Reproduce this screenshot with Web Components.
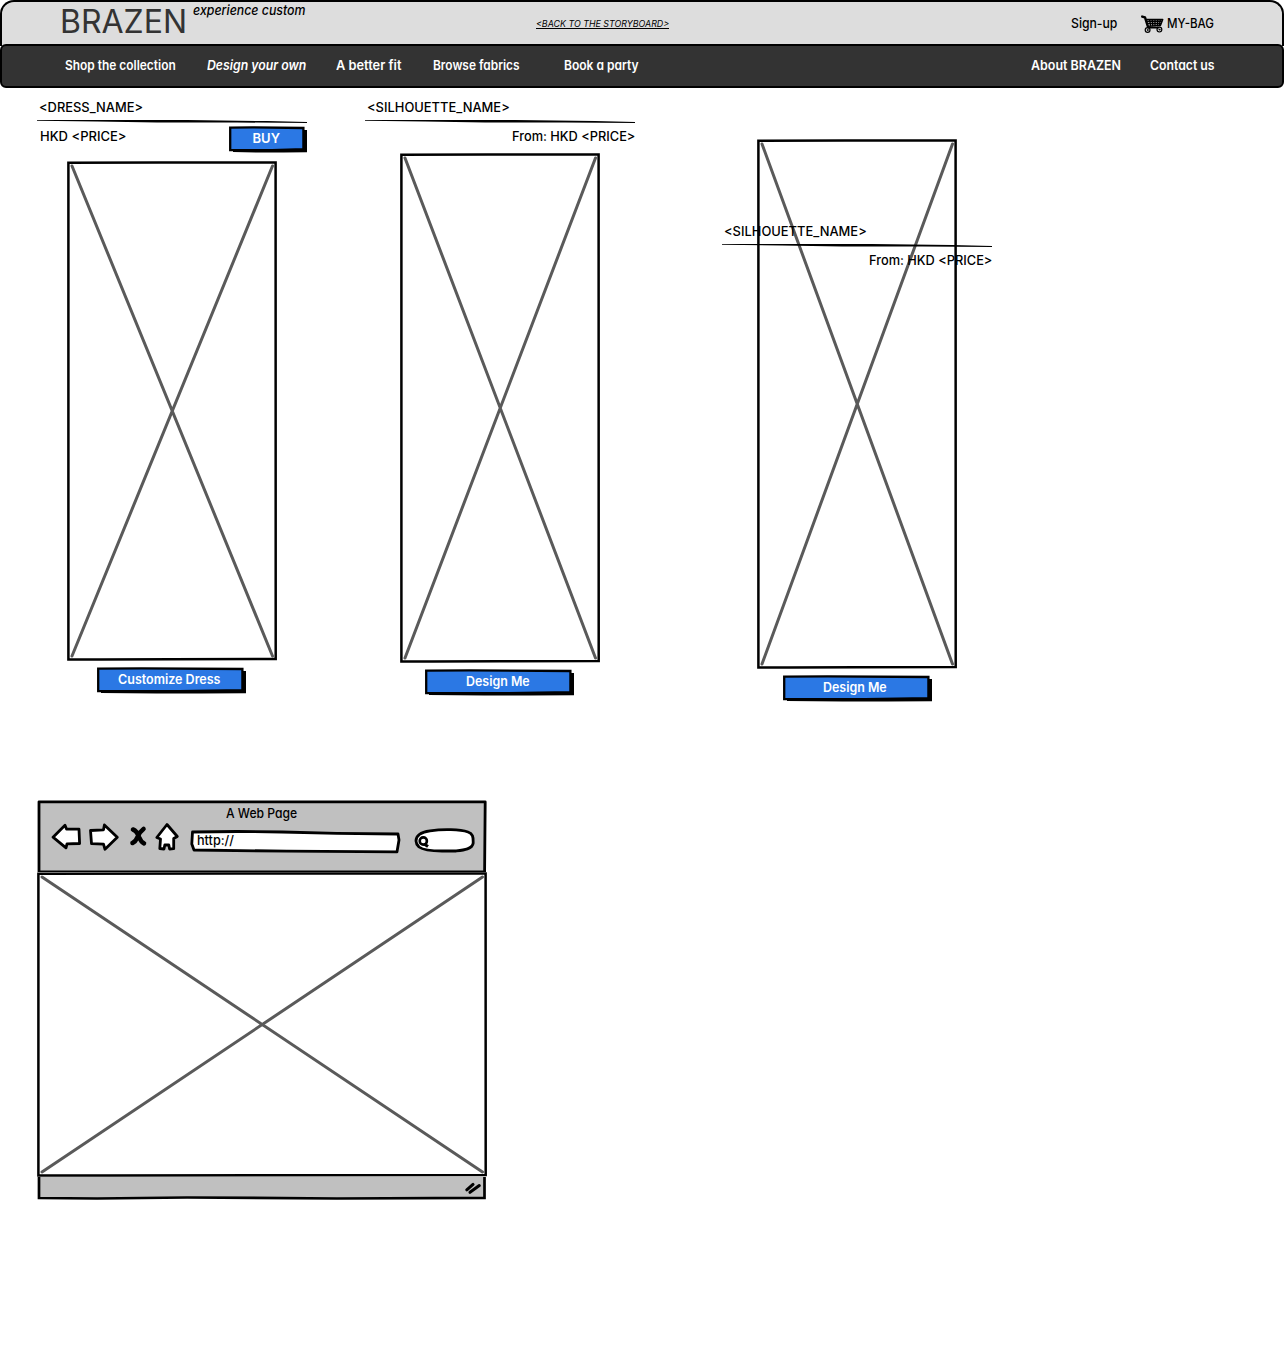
<!DOCTYPE html>
<html lang="en">
<head>
<meta charset="utf-8">
<title>BRAZEN</title>
<style>
body{margin:0;background:#fff;color:#000;font:500 13px/16px Inter,Lato,"Liberation Sans",sans-serif;font-feature-settings:"cv11" 1}
</style>
</head>
<body>
<brazen-page></brazen-page>
<script>
const define=(name,html,setup)=>customElements.define(name,class extends HTMLElement{
  connectedCallback(){
    if(this.shadowRoot)return;
    const t=document.createElement('template');
    t.innerHTML=typeof html==='function'?html(this):html;
    this.attachShadow({mode:'open'}).append(t.content.cloneNode(true));
    if(setup)setup(this);
  }
});

// Text fitted to a given width: <sk-label w="111">
define('sk-label',el=>`<style>
:host{display:block;flex:none;width:${el.getAttribute('w')}px;height:1.24em;line-height:1.24;white-space:nowrap}
span{display:inline-block;transform-origin:0 50%}
</style><span><slot></slot></span>`,el=>{
  const s=el.shadowRoot.querySelector('span');
  s.style.transform=`scaleX(${el.getAttribute('w')/s.offsetWidth})`;
});

define('sk-button',el=>{
  const w=+el.getAttribute('w');
  return `<style>
:host{display:grid;flex:none;width:${w}px;height:27px;color:#fff;font-weight:600}
svg,div{grid-area:1/1}
div{display:flex;justify-content:center;align-items:center;width:${w-4}px;height:25px}
</style>
<svg width="${w}" height="27"><path d="M4 4H${w}V26.2L${w*.7} 26.6H${w*.4}L4 26Z"/>
<path d="M1.2 1.6L${w*.3} 1.4L${w-3.6} 2V23.2L${w*.55} 24.2L1.2 24Z" fill="#2b78e4" stroke="#000" stroke-width="2.3"/></svg>
<div><slot></slot></div>`;
});

define('sk-rule',`<style>:host{display:block;height:5px}svg{display:block}</style>
<svg width="270" height="5"><path d="M0 1L60 1L150 1.1L230 2.1L270 3.1V4L200 3.5L120 3.4L60 2.5L0 1.8Z"/></svg>`);

define('sk-image',el=>{
  const w=+el.getAttribute('w'),h=+el.getAttribute('h');
  return `<style>:host{display:block;width:${w}px;height:${h}px}svg{display:block}</style>
<svg width="${w}" height="${h}" fill="none">
<path d="M5 5L${w-4.5} ${h-5}M${w-4.5} 5L5 ${h-5}" stroke="#5a5a5a" stroke-width="3" stroke-linecap="round"/>
<path d="M1.4 1.8L${w*.44} 1.6L${w-1.4} 1.4L${w-1.3} ${h-2}L${w*.5} ${h-1.8}L${w*.16} ${h-1.4}L1.4 ${h-1.6}Z" stroke="#000" stroke-width="2.5"/></svg>`;
});

define('sk-cart',`<style>:host{display:block;flex:none;width:24px;height:18px}svg{display:block}</style>
<svg width="24" height="18" fill="none" stroke="#000" stroke-linecap="round" stroke-linejoin="round">
<path d="M2.2 1.6L5 2.4L8 11.8" stroke-width="2.4"/><path d="M6.5 4.4H22.7L20.4 10.5L8.5 11.2" stroke-width="1.5"/>
<path d="M7 6.3H21.5M8 8.5H20.5M9.6 4.6L10.6 10.7M12.3 4.6L12.8 10.7M15 4.6V10.7M17.7 4.6L17.4 10.7M20.3 4.6L19.3 10.2" stroke-width="1.4"/>
<path d="M8 12.8H18.5" stroke-width="1.6"/><circle cx="7.6" cy="15" r="2.4" stroke-width="1.2"/><circle cx="19.4" cy="14.6" r="2.4" stroke-width="1.2"/><circle cx="7.6" cy="15" r=".5"/><circle cx="19.4" cy="14.6" r=".5"/></svg>`);

define('brazen-header',`<style>
:host{display:block}
.top,.nav{display:flex;box-sizing:border-box;border:2px solid #000}
.top{height:46px;background:#ddd;border-bottom:0;border-radius:14px 14px 0 0;padding-left:58px}
.nav{height:44px;margin-top:-2px;background:#333;color:#fff;border-radius:6px;padding:0 0 1px 63px;align-items:center;font-weight:600}
.logo{font-size:32px;font-weight:400;color:#333}
.tag{font-style:italic;margin:0 0 0 6px}
.back{font-size:9px;font-style:italic;font-weight:400;height:10px;border-bottom:1px solid #000;margin:16px 0 0 230px}
.sign{margin:13px 0 0 402px}
sk-cart{margin:13px 3px 0 23px}
.bag{margin-top:13px}
</style>
<div class="top"><sk-label class="logo" w="127">BRAZEN</sk-label><sk-label class="tag" w="113">experience custom</sk-label><sk-label class="back" w="133">&lt;BACK TO THE STORYBOARD&gt;</sk-label><sk-label class="sign" w="46">Sign-up</sk-label><sk-cart></sk-cart><sk-label class="bag" w="47">MY-BAG</sk-label></div>
<div class="nav"><sk-label w="111">Shop the collection</sk-label><sk-label w="99" style="margin-left:31px;font-style:italic">Design your own</sk-label><sk-label w="65" style="margin-left:30px">A better fit</sk-label><sk-label w="87" style="margin-left:32px">Browse fabrics</sk-label><sk-label w="75" style="margin-left:44px">Book a party</sk-label><sk-label w="90" style="margin-left:392px">About BRAZEN</sk-label><sk-label w="65" style="margin-left:29px">Contact us</sk-label></div>`);

define('product-caption',`<style>
:host{display:block;width:270px;height:54px}
.name{display:flex;padding-left:2px;height:20px}
.row{display:flex;justify-content:space-between;padding-left:3px}
</style><div class="name"><slot name="name"></slot></div><sk-rule></sk-rule><div class="row"><slot></slot></div>`);

define('product-card',`<style>
:host{display:flex;flex-direction:column;align-items:center;position:relative;width:270px;flex:none}
</style><slot></slot>`);

define('sk-browser',`<style>
:host{display:block;width:450px}
svg{display:block}
.bar{display:grid;height:72px}
.bar>*{grid-area:1/1}
.texts{display:flex;flex-direction:column}
.title{margin:5px 0 0 189px}
.url{margin:11px 0 0 160px}
</style>
<div class="bar">
<svg width="450" height="72" stroke="#000" stroke-width="2.8" stroke-linejoin="round" fill="#fff">
<path d="M2 1.8H448.2L447.6 72H2Z" fill="#c0c0c0"/>
<path d="M16 37.2L28 25.2L29.5 29L42 29.2L42.6 43.5L30 43.8L29 47.8Z"/>
<path d="M53.5 30.5L66.5 29.8L67.4 25L80.3 37.3L68 49.3L66.5 44.2L54.5 43.6Z"/>
<path d="M130 24.5L140.3 36.5L136.7 38.5V48.7L132.6 49L131.8 45L127.8 45L127 49L122.8 48.5L123.5 39L119.8 37.5Z"/>
<path d="M155.5 32L200 31.5L245 32L300 33.3L361 34L362 40L360 51.8L250 51.2L157 50L154.8 44Z"/>
<path d="M379 41C379 35 384 32 393 30.8C406 29 423 29.3 431 32C437 34 436 39 436.2 43C435.5 49 427 50 419 51H405C395 51 386 50 382 47Q379 44 379 41Z"/>
<circle cx="386.3" cy="41" r="3.6" stroke-width="2.6"/><path d="M387.5 44.2L391 46.6" fill="none" stroke-width="3"/>
<path d="M96 29.5Q100 31 102 37Q104 42 107 43.3M106.5 29Q102.500 32 100.500 37Q98.500 42 95.500 43" fill="none" stroke-width="4.6" stroke-linecap="round"/>
</svg>
<div class="texts"><sk-label class="title" w="71">A Web Page</sk-label><sk-label class="url" w="37">http://</sk-label></div></div>
<sk-image w="450" h="305"></sk-image>
<svg width="450" height="23" fill="none" stroke="#000"><path d="M2 -2V21L60 21.5L150 20.5L300 21.5L447.5 20.8V-2" fill="#c0c0c0" stroke-width="2.7"/>
<path d="M429.800 12.800L436 7.400M433 15.300L442.300 8.600" stroke-width="3.1" stroke-linecap="round"/></svg>`);

define('brazen-page',`<style>
:host{display:block;width:1284px;height:1362px;overflow:hidden}
.cards{display:flex;height:701px;padding:11px 0 0 37px}
.over{position:absolute;left:0;top:124px}
sk-browser{margin-left:37px}
</style>
<brazen-header></brazen-header>
<div class="cards">
<product-card>
<product-caption><sk-label slot="name" w="104">&lt;DRESS_NAME&gt;</sk-label><sk-label w="87" style="margin-top:4px">HKD &lt;PRICE&gt;</sk-label><sk-button w="78" style="margin-top:2px"><sk-label w="27">BUY</sk-label></sk-button></product-caption>
<sk-image w="210" h="500" style="margin-top:8px"></sk-image>
<sk-button w="149" style="margin-top:6px;margin-right:2px"><sk-label w="102">Customize Dress</sk-label></sk-button>
</product-card>
<product-card style="margin-left:58px">
<product-caption><sk-label slot="name" w="143">&lt;SILHOUETTE_NAME&gt;</sk-label><sk-label w="123" style="margin:4px 0 0 auto">From: HKD &lt;PRICE&gt;</sk-label></product-caption>
<sk-image w="200" h="510"></sk-image>
<sk-button w="149" style="margin-top:6px;margin-right:1px"><sk-label w="64">Design Me</sk-label></sk-button>
</product-card>
<product-card style="margin-left:87px">
<sk-image w="200" h="530" style="margin-top:40px"></sk-image>
<sk-button w="149" style="margin-top:6px"><sk-label w="64">Design Me</sk-label></sk-button>
<product-caption class="over"><sk-label slot="name" w="143">&lt;SILHOUETTE_NAME&gt;</sk-label><sk-label w="123" style="margin:4px 0 0 auto">From: HKD &lt;PRICE&gt;</sk-label></product-caption>
</product-card>
</div>
<sk-browser></sk-browser>`);
</script>
</body>
</html>
